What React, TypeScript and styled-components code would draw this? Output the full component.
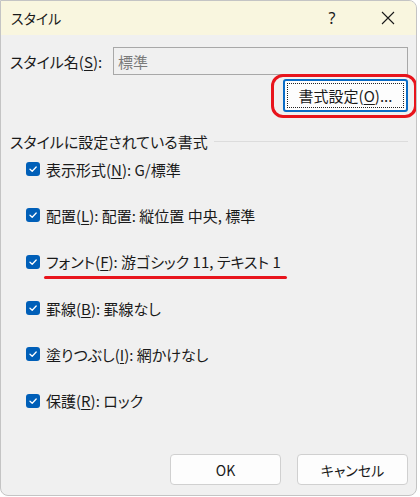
import React from "react";
import styled, { createGlobalStyle } from "styled-components";

const Global = createGlobalStyle`
  html, body { margin: 0; padding: 0; background: #ffffff; }
  body {
    font-family: "Noto Sans CJK JP", "Noto Sans", sans-serif;
    font-feature-settings: "palt";
    color: #1a1a1a;
  }
`;

const Window = styled.div`
  width: 417px;
  height: 496px;
  box-sizing: border-box;
  border: 1px solid #c4c4c4;
  border-radius: 0 8px 8px 8px;
  background: #f0f0f0;
  overflow: hidden;
  display: flex;
  flex-direction: column;
`;

const TitleBar = styled.div`
  height: 34px;
  background: #f9f6df;
  display: flex;
  align-items: center;
  padding-left: 10px;
  font-size: 14px;
`;

const Title = styled.div`
  flex: 1;
`;

const TitleButton = styled.div`
  width: 56px;
  display: flex;
  justify-content: center;
  align-items: center;
  font-size: 16px;
  font-family: "Noto Sans", sans-serif;
`;

const Body = styled.div`
  flex: 1;
  display: flex;
  flex-direction: column;
  padding: 12px 8px 0 9px;
  font-size: 15px;
`;

const NameRow = styled.div`
  display: flex;
  align-items: center;
  height: 28px;
`;

const Label = styled.div`
  width: 103px;
  white-space: nowrap;
`;

const Input = styled.div`
  flex: 1;
  height: 28px;
  box-sizing: border-box;
  border: 1px solid #a8a8a8;
  background: #f0f0f0;
  color: #7a7a7a;
  display: flex;
  align-items: center;
  padding-left: 4px;
`;

const ButtonRow = styled.div`
  display: flex;
  justify-content: flex-end;
  margin-top: 4px;
`;

const Annotated = styled.div`
  position: relative;
  &::after {
    content: "";
    position: absolute;
    left: -12px;
    right: -9px;
    top: -5px;
    bottom: -6px;
    border: 3px solid #e8141c;
    border-radius: 12px;
    pointer-events: none;
  }
`;

const FocusButton = styled.div`
  width: 125px;
  height: 33px;
  box-sizing: border-box;
  border: 2px solid #0a6cc6;
  border-radius: 3px;
  background: #fdfdfd;
  display: flex;
  padding: 2px;
`;

const FocusRing = styled.div`
  flex: 1;
  display: flex;
  align-items: center;
  justify-content: center;
  border: 1px dotted #222;
  white-space: nowrap;
`;

const GroupHeader = styled.div`
  display: flex;
  align-items: center;
  height: 22px;
  margin-top: 18px;
  gap: 6px;
  &::after {
    content: "";
    flex: 1;
    height: 1px;
    background: #dcdcdc;
  }
`;

const List = styled.div`
  display: flex;
  flex-direction: column;
  padding-left: 16px;
  margin-top: -6px;
`;

const Row = styled.div`
  height: 46.3px;
  display: flex;
  align-items: center;
  gap: 6px;
  white-space: nowrap;
`;

const Box = styled.div`
  width: 14px;
  height: 14px;
  border-radius: 3px;
  background: #005fb8;
  display: flex;
  align-items: center;
  justify-content: center;
  flex: none;
`;

const Text = styled.span<{ $marked?: boolean }>`
  position: relative;
  ${(p) =>
    p.$marked &&
    `
    &::after {
      content: "";
      position: absolute;
      left: -2px;
      right: -6px;
      bottom: -7px;
      height: 3px;
      border-radius: 2px;
      background: #e8141c;
    }
  `}
`;

const U = styled.span`
  text-decoration: underline;
  text-underline-offset: 2px;
`;

const Footer = styled.div`
  margin-top: auto;
  margin-bottom: 10px;
  display: flex;
  justify-content: flex-end;
  gap: 16px;
`;

const Btn = styled.div`
  width: 111px;
  height: 31px;
  box-sizing: border-box;
  border: 1px solid #d0d0d0;
  border-radius: 4px;
  background: #fdfdfd;
  display: flex;
  align-items: center;
  justify-content: center;
  font-size: 14px;
`;

const Check = () => (
  <Box>
    <svg width="10" height="10" viewBox="0 0 10 10">
      <path d="M2 5.2 L4.2 7.2 L8.2 3" fill="none" stroke="#fff" strokeWidth="1.3" strokeLinecap="round" strokeLinejoin="round" />
    </svg>
  </Box>
);

const items: { pre: string; key: string; post: string; marked?: boolean }[] = [
  { pre: "表示形式(", key: "N", post: "): G/標準" },
  { pre: "配置(", key: "L", post: "): 配置: 縦位置 中央, 標準" },
  { pre: "フォント(", key: "F", post: "): 游ゴシック 11, テキスト 1", marked: true },
  { pre: "罫線(", key: "B", post: "): 罫線なし" },
  { pre: "塗りつぶし(", key: "I", post: "): 網かけなし" },
  { pre: "保護(", key: "R", post: "): ロック" },
];

export default function App() {
  return (
    <>
      <Global />
      <Window>
        <TitleBar>
          <Title>スタイル</Title>
          <TitleButton>?</TitleButton>
          <TitleButton>
            <svg width="14" height="14" viewBox="0 0 14 14">
              <path d="M1 1 L13 13 M13 1 L1 13" stroke="#1a1a1a" strokeWidth="1.1" />
            </svg>
          </TitleButton>
        </TitleBar>
        <Body>
          <NameRow>
            <Label>
              スタイル名(<U>S</U>):
            </Label>
            <Input>標準</Input>
          </NameRow>
          <ButtonRow>
            <Annotated>
              <FocusButton>
                <FocusRing>
                  書式設定(<U>O</U>)...
                </FocusRing>
              </FocusButton>
            </Annotated>
          </ButtonRow>
          <GroupHeader>スタイルに設定されている書式</GroupHeader>
          <List>
            {items.map((it) => (
              <Row key={it.key}>
                <Check />
                <Text $marked={it.marked}>
                  {it.pre}
                  <U>{it.key}</U>
                  {it.post}
                </Text>
              </Row>
            ))}
          </List>
          <Footer>
            <Btn>OK</Btn>
            <Btn>キャンセル</Btn>
          </Footer>
        </Body>
      </Window>
    </>
  );
}
